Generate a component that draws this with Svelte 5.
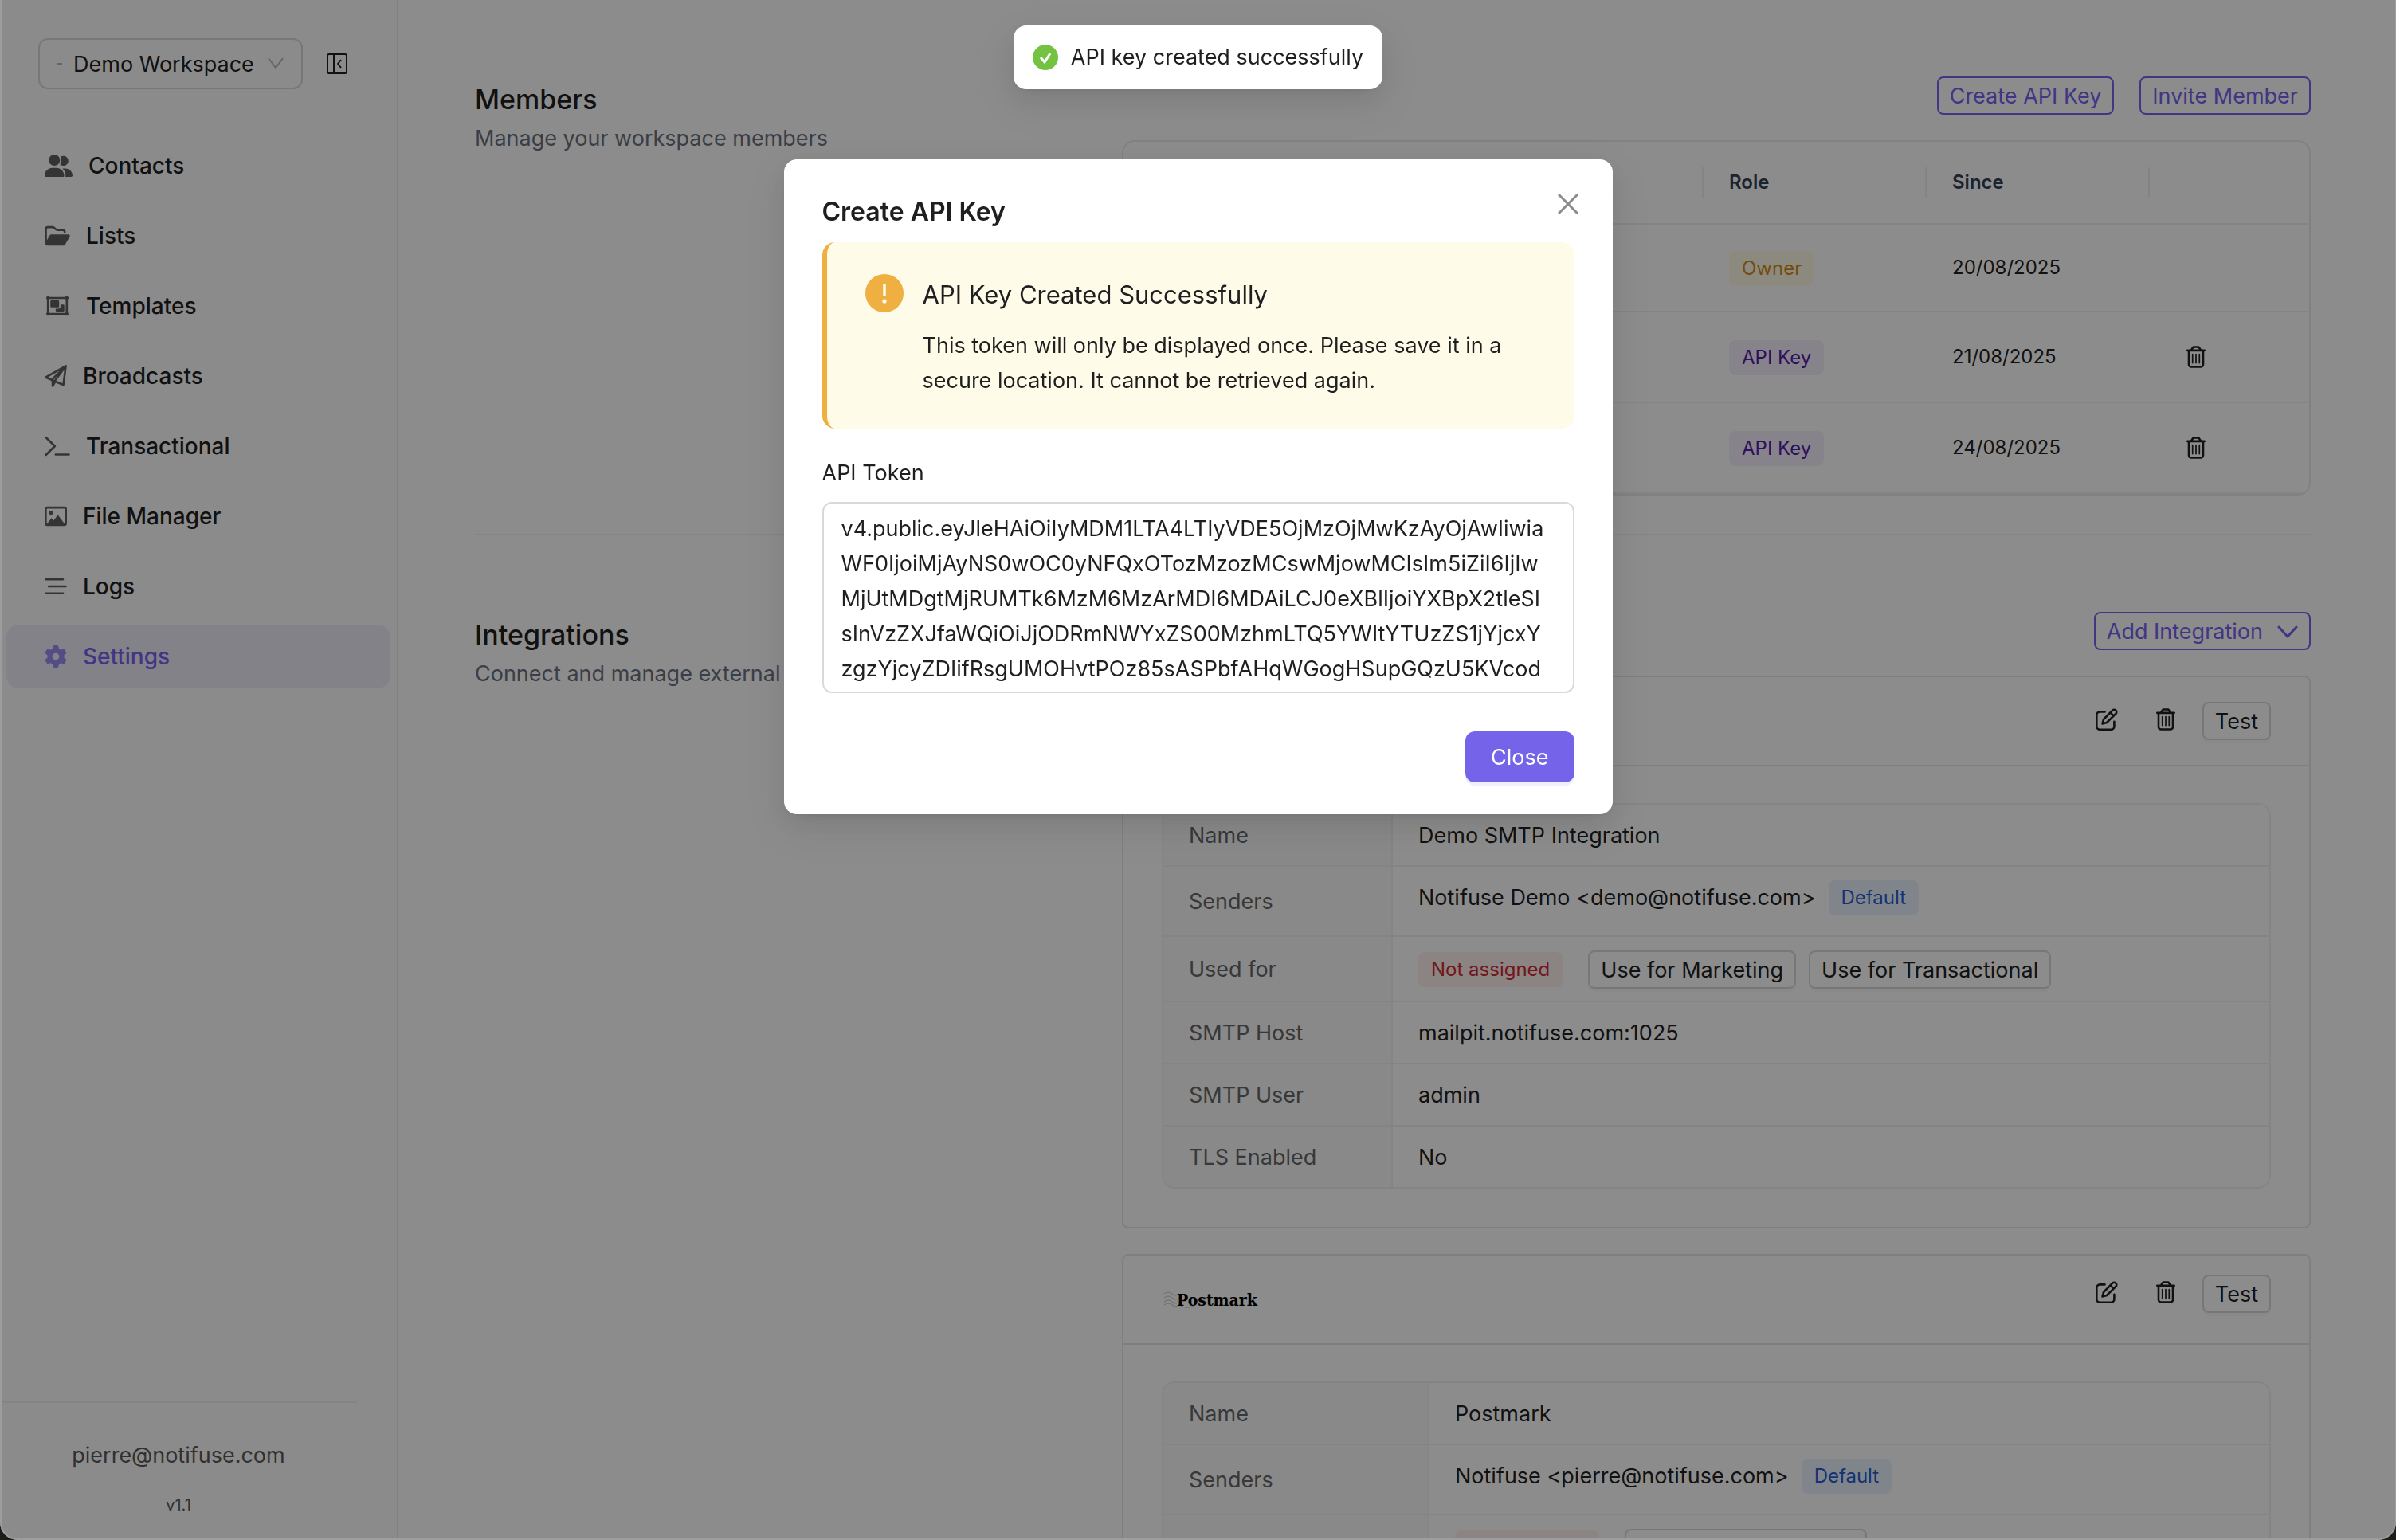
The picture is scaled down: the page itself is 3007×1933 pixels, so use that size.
<script>
	const trashPath = 'M170.5 51.6L151.5 80h145l-19-28.4c-1.5-2.2-4-3.6-6.7-3.6H177.1c-2.7 0-5.2 1.3-6.7 3.6zm147-26.6L354.2 80H368h48 8c13.3 0 24 10.7 24 24s-10.7 24-24 24h-8V432c0 44.2-35.8 80-80 80H112c-44.2 0-80-35.8-80-80V128H24c-13.3 0-24-10.7-24-24S10.7 80 24 80h8H80 93.8l36.7-55.1C140.9 9.4 158.4 0 177.1 0h93.7c18.7 0 36.2 9.4 46.6 24.9zM80 128V432c0 17.7 14.3 32 32 32H336c17.7 0 32-14.3 32-32V128H80zm80 64V400c0 8.8-7.2 16-16 16s-16-7.2-16-16V192c0-8.8 7.2-16 16-16s16 7.2 16 16zm80 0V400c0 8.8-7.2 16-16 16s-16-7.2-16-16V192c0-8.8 7.2-16 16-16s16 7.2 16 16zm80 0V400c0 8.8-7.2 16-16 16s-16-7.2-16-16V192c0-8.8 7.2-16 16-16s16 7.2 16 16z'

	// fill = solid shapes, line = stroked shapes, width = icon width in px at 28px height
	const nav = [
		{
			label: 'Contacts', box: 640, width: 35,
			fill: 'M96 128a128 128 0 1 1 256 0A128 128 0 1 1 96 128zM0 482.3C0 383.8 79.8 304 178.3 304h91.4C368.2 304 448 383.8 448 482.3c0 16.4-13.3 29.7-29.7 29.7H29.7C13.3 512 0 498.7 0 482.3zM609.3 512H471.4c5.4-9.4 8.6-20.3 8.6-32v-8c0-60.7-27.1-115.2-69.8-151.8c2.4-.1 4.7-.2 7.1-.2h61.4C567.8 320 640 392.2 640 481.3c0 17-13.8 30.7-30.7 30.7zM432 256c-31 0-59-12.6-79.3-32.9C372.4 196.5 384 163.6 384 128c0-26.8-6.6-52.1-18.3-74.3C384.3 40.1 407.2 32 432 32c61.9 0 112 50.1 112 112s-50.1 112-112 112z'
		},
		{
			label: 'Lists', box: 576, width: 32,
			fill: 'M384 480h48c11.4 0 21.9-6 27.6-15.9l112-192c5.8-9.9 5.8-22.1 .1-32.1S555.5 224 544 224H144c-11.4 0-21.9 6-27.6 15.9L48 357.1V96c0-8.8 7.2-16 16-16H181.5c4.2 0 8.3 1.7 11.3 4.7l26.5 26.5c21 21 49.5 32.8 79.2 32.8H416c8.8 0 16 7.2 16 16v32h48V160c0-35.3-28.7-64-64-64H298.5c-17 0-33.3-6.7-45.3-18.7L226.7 50.7c-12-12-28.3-18.7-45.3-18.7H64C28.7 32 0 60.7 0 96V416c0 35.3 28.7 64 64 64H87.7 384z'
		},
		{
			label: 'Templates', box: 576, width: 32,
			fill: 'M152 128h152a24 24 0 0 1 24 24v112a24 24 0 0 1-24 24H152a24 24 0 0 1-24-24V152a24 24 0 0 1 24-24zM360 224h64a24 24 0 0 1 24 24v112a24 24 0 0 1-24 24H272a24 24 0 0 1-24-24v-40h56a56 56 0 0 0 56-56zM72 32a40 40 0 1 0 .1 0zM504 32a40 40 0 1 0 .1 0zM72 400a40 40 0 1 0 .1 0zM504 400a40 40 0 1 0 .1 0z',
			line: 'M72 72H504V440H72z'
		},
		{
			label: 'Broadcasts', box: 512, width: 28,
			fill: 'M160 350L262 396L206 500Q160 524 160 474z',
			line: 'M486 26L24 284L160 346L430 456zM486 26L160 346M486 26L222 380'
		},
		{ label: 'Transactional', box: 576, width: 32, line: 'M24 56L230 256L24 456M248 448H552' },
		{
			label: 'File Manager', box: 512, width: 28,
			fill: 'M144 128a48 48 0 1 0 .1 0zM40 448L160 296L208 350L304 224L472 448z',
			line: 'M64 56H448A40 40 0 0 1 488 96V416A40 40 0 0 1 448 456H64A40 40 0 0 1 24 416V96A40 40 0 0 1 64 56z'
		},
		{ label: 'Logs', box: 512, width: 28, line: 'M28 96H420M92 256H484M28 416H420' },
		{
			label: 'Settings', box: 512, width: 28, active: true,
			fill: 'M495.9 166.6c3.2 8.7 .5 18.4-6.4 24.6l-43.3 39.4c1.1 8.3 1.7 16.8 1.7 25.4s-.6 17.1-1.7 25.4l43.3 39.4c6.9 6.2 9.6 15.9 6.4 24.6c-4.4 11.9-9.7 23.3-15.8 34.3l-4.7 8.1c-6.6 11-14 21.4-22.1 31.2c-5.9 7.2-15.7 9.6-24.5 6.8l-55.7-17.7c-13.4 10.3-28.2 18.9-44 25.4l-12.5 57.1c-2 9.1-9 16.3-18.2 17.8c-13.8 2.3-28 3.5-42.5 3.5s-28.7-1.2-42.5-3.5c-9.2-1.5-16.2-8.7-18.2-17.8l-12.5-57.1c-15.8-6.5-30.6-15.1-44-25.4L83.1 425.9c-8.8 2.8-18.6 .3-24.5-6.8c-8.1-9.8-15.5-20.2-22.1-31.2l-4.7-8.1c-6.1-11-11.4-22.4-15.8-34.3c-3.2-8.7-.5-18.4 6.4-24.6l43.3-39.4C64.6 273.1 64 264.6 64 256s.6-17.1 1.7-25.4L22.4 191.2c-6.9-6.2-9.6-15.9-6.4-24.6c4.4-11.9 9.7-23.3 15.8-34.3l4.7-8.1c6.6-11 14-21.4 22.1-31.2c5.9-7.2 15.7-9.6 24.5-6.8l55.7 17.7c13.4-10.3 28.2-18.9 44-25.4l12.5-57.1c2-9.1 9-16.3 18.2-17.8C227.3 1.2 241.5 0 256 0s28.7 1.2 42.5 3.5c9.2 1.5 16.2 8.7 18.2 17.8l12.5 57.1c15.8 6.5 30.6 15.1 44 25.4l55.7-17.7c8.8-2.8 18.6-.3 24.5 6.8c8.1 9.8 15.5 20.2 22.1 31.2l4.7 8.1c6.1 11 11.4 22.4 15.8 34.3zM256 336a80 80 0 1 0 0-160 80 80 0 1 0 0 160z'
		}
	]

	const members = [
		{ role: 'Owner', color: 'gold', since: '20/08/2025' },
		{ role: 'API Key', color: 'purple', since: '21/08/2025', removable: true },
		{ role: 'API Key', color: 'purple', since: '24/08/2025', removable: true }
	]

	const integrations = [
		{
			labelWidth: 288,
			rows: [
				{ label: 'Name', value: 'Demo SMTP Integration' },
				{ label: 'Senders', sender: 'Notifuse Demo <demo@notifuse.com>' },
				{ label: 'Used for', uses: ['Marketing', 'Transactional'] },
				{ label: 'SMTP Host', value: 'mailpit.notifuse.com:1025' },
				{ label: 'SMTP User', value: 'admin' },
				{ label: 'TLS Enabled', value: 'No' }
			]
		},
		{
			logo: true,
			labelWidth: 334,
			rows: [
				{ label: 'Name', value: 'Postmark' },
				{ label: 'Senders', sender: 'Notifuse <pierre@notifuse.com>' },
				{ label: 'Used for', uses: ['Transactional'] }
			]
		}
	]

	const token = [
		'v4.public.eyJleHAiOiIyMDM1LTA4LTIyVDE5OjMzOjMwKzAyOjAwIiwia',
		'WF0IjoiMjAyNS0wOC0yNFQxOTozMzozMCswMjowMCIsIm5iZiI6IjIw',
		'MjUtMDgtMjRUMTk6MzM6MzArMDI6MDAiLCJ0eXBlIjoiYXBpX2tleSI',
		'sInVzZXJfaWQiOiJjODRmNWYxZS00MzhmLTQ5YWItYTUzZS1jYjcxY',
		'zgzYjcyZDIifRsgUMOHvtPOz85sASPbfAHqWGogHSupGQzU5KVcod'
	].join('\n')
</script>

{#snippet trash()}
	<svg width="24" height="28" viewBox="0 0 448 512" fill="currentColor"><path d={trashPath} /></svg>
{/snippet}

<div class="app">
	<aside>
		<div class="top">
			<div class="workspace">
				<span class="dash"></span>
				<select aria-label="Workspace">
					<option>Demo Workspace</option>
				</select>
				<svg width="20" height="16" viewBox="0 0 20 16" fill="none" stroke="currentColor" stroke-width="2"><path d="M1 1l9 12 9-12" /></svg>
			</div>
			<button class="collapse" aria-label="Collapse menu">
				<svg width="26" height="26" viewBox="0 0 26 26" fill="none" stroke="currentColor" stroke-width="2" stroke-linejoin="round">
					<rect x="1" y="1" width="24" height="24" rx="2" />
					<path d="M9 1v24M18 8l-4 5 4 5" />
				</svg>
			</button>
		</div>

		<nav>
			{#each nav as item}
				<a href="#{item.label}" class={item.active ? 'active' : ''}>
					<svg width={item.width} height="28" viewBox="0 0 {item.box} 512">
						{#if item.fill}<path d={item.fill} fill="currentColor" />{/if}
						{#if item.line}<path d={item.line} fill="none" stroke="currentColor" stroke-width="48" stroke-linecap="round" stroke-linejoin="round" />{/if}
					</svg>
					{item.label}
				</a>
			{/each}
		</nav>

		<footer>
			<div class="email">pierre@notifuse.com</div>
			<div class="version">v1.1</div>
		</footer>
	</aside>

	<main>
		<section>
			<div class="intro">
				<h2>Members</h2>
				<p>Manage your workspace members</p>
			</div>
			<div class="content">
				<div class="actions">
					<button class="btn ghost">Create API Key</button>
					<button class="btn ghost">Invite Member</button>
				</div>
				<div class="table-wrap">
					<table class="members">
						<thead>
							<tr>
								<th></th>
								<th class="col">Role</th>
								<th class="col">Since</th>
								<th class="last"></th>
							</tr>
						</thead>
						<tbody>
							{#each members as member}
								<tr class={member.removable ? 'tall' : ''}>
									<td></td>
									<td><span class="tag {member.color}">{member.role}</span></td>
									<td>{member.since}</td>
									<td>
										{#if member.removable}
											<button class="icon-btn" aria-label="Delete">{@render trash()}</button>
										{/if}
									</td>
								</tr>
							{/each}
						</tbody>
					</table>
				</div>
			</div>
		</section>

		<hr />

		<section>
			<div class="intro">
				<h2>Integrations</h2>
				<p>Connect and manage external services</p>
			</div>
			<div class="content">
				<div class="actions">
					<button class="btn ghost">
						Add Integration
						<svg width="26" height="16" viewBox="0 0 26 16" fill="none" stroke="currentColor" stroke-width="3" stroke-linecap="round" stroke-linejoin="round"><path d="M2 2l11 12L24 2" /></svg>
					</button>
				</div>
				{#each integrations as integration}
					<div class="card">
						<div class="card-head" class:with-logo={integration.logo}>
							{#if integration.logo}
								<svg class="logo" width="124" height="32" viewBox="0 0 124 32">
									<path d="M3 9q5-4 10 0t9 0M3 14q5-4 10 0t9 0M3 19q5-4 10 0t9 0M3 23q5-4 10 0t9 0q9 6 18 1" fill="none" stroke="#c4c4c4" stroke-width="1" />
									<text x="19" y="24">Postmark</text>
								</svg>
							{/if}
							<div class="tools">
								<button class="icon-btn" aria-label="Edit">
									<svg width="28" height="28" viewBox="0 0 28 28" fill="none" stroke="currentColor" stroke-width="2.6" stroke-linecap="round" stroke-linejoin="round">
										<path d="M11.5 4.4H5.3a4 4 0 0 0-4 4v14.3a4 4 0 0 0 4 4h14.1a4 4 0 0 0 4-4v-5.900" />
										<path d="M8.5 19.5L10 14L21.2 2.6a2.9 2.9 0 0 1 4.2 4.2L14 18zM18.5 5.4l4.2 4.2" />
									</svg>
								</button>
								<button class="icon-btn" aria-label="Delete">{@render trash()}</button>
								<button class="btn">Test</button>
							</div>
						</div>
						<div class="card-body">
							<table class="details">
								<tbody>
									{#each integration.rows as row}
										<tr>
											<th style="width: {integration.labelWidth}px">{row.label}</th>
											<td>
												{#if row.sender}
													<div class="sender">{row.sender}<span class="tag blue">Default</span></div>
												{:else if row.uses}
													<div class="usage">
														<span class="tag red">Not assigned</span>
														{#each row.uses as use}
															<button class="btn">Use for {use}</button>
														{/each}
													</div>
												{:else}
													{row.value}
												{/if}
											</td>
										</tr>
									{/each}
								</tbody>
							</table>
						</div>
					</div>
				{/each}
			</div>
		</section>
	</main>
</div>

<div class="mask">
	<div class="modal" role="dialog" aria-labelledby="modal-title">
		<button class="close" aria-label="Dismiss">
			<svg width="26" height="26" viewBox="0 0 26 26" stroke="currentColor" stroke-width="3"><path d="M1 1l24 24M25 1L1 25" /></svg>
		</button>
		<h3 id="modal-title">Create API Key</h3>
		<div class="alert">
			<svg width="48" height="48" viewBox="0 0 48 48">
				<circle cx="24" cy="24" r="24" fill="#efaf41" />
				<path d="M22.3 12h3.4v16h-3.4z" fill="#fff" />
				<circle cx="24" cy="34" r="2.6" fill="#fff" />
			</svg>
			<div>
				<div class="alert-title">API Key Created Successfully</div>
				<div>This token will only be displayed once. Please save it in a secure location. It cannot be retrieved again.</div>
			</div>
		</div>
		<label for="token">API Token</label>
		<textarea id="token" readonly value={token}></textarea>
		<div class="modal-foot">
			<button class="primary">Close</button>
		</div>
	</div>
</div>

<div class="toast-layer">
	<div class="toast" role="status">
		<svg width="32" height="32" viewBox="0 0 32 32">
			<circle cx="16" cy="16" r="16" fill="#73c241" />
			<path d="M10 16l5 6 7-11" fill="none" stroke="#fff" stroke-width="3" />
		</svg>
		API key created successfully
	</div>
</div>

<div class="frame"></div>

<style>
	:global(body) {
		margin: 0;
		overflow: hidden;
		font-family: Inter, "Noto Sans", sans-serif;
		font-size: 27px;
		line-height: 44px;
		color: #1f1f1f;
		background: #fff;
	}

	:global(*) {
		box-sizing: border-box;
	}

	svg {
		display: block;
		flex: none;
	}

	button,
	select,
	textarea {
		font: inherit;
		color: inherit;
		background: none;
		border: 0;
		margin: 0;
		padding: 0;
	}

	.app {
		display: flex;
		height: 100vh;
		overflow: hidden;
	}

	/* sidebar */

	aside {
		width: 500px;
		flex: none;
		display: flex;
		flex-direction: column;
		border-right: 2px solid #ebebeb;
		background: #fdfdfd;
	}

	.top {
		display: flex;
		align-items: center;
		padding: 48px 48px 0;
		gap: 30px;
	}

	.workspace {
		display: flex;
		align-items: center;
		width: 332px;
		height: 64px;
		padding: 0 22px;
		border: 2px solid #d9d9d9;
		border-radius: 12px;
	}

	.dash {
		width: 6px;
		height: 2px;
		margin-right: 14px;
		background: #bbb;
	}

	.workspace select {
		flex: 1;
		padding-top: 2px;
		appearance: none;
	}

	.workspace svg {
		color: #bbb;
	}

	nav {
		display: flex;
		flex-direction: column;
		gap: 8px;
		padding: 56px 8px 0;
		flex: 1;
	}

	nav a {
		display: flex;
		align-items: center;
		gap: 20px;
		height: 80px;
		padding: 0 48px;
		border-radius: 16px;
		font-size: 28px;
		font-weight: 500;
		color: inherit;
		text-decoration: none;
	}

	nav svg {
		opacity: .7;
	}

	nav a.active {
		background: #f0edfa;
		color: #7763f1;
	}

	footer {
		width: 448px;
		height: 174px;
		padding-top: 44px;
		border-top: 2px solid #f0f0f0;
		text-align: center;
		color: #595959;
	}

	.version {
		margin-top: 18px;
		font-size: 20px;
	}

	/* page */

	main {
		flex: 1;
		padding: 96px 107px 0 96px;
	}

	section {
		display: grid;
		grid-template-columns: minmax(0, 1fr) minmax(0, 2fr);
		gap: 66px;
	}

	h2 {
		margin: 0;
		font-size: 34px;
		line-height: 58px;
		font-weight: 500;
	}

	p {
		margin: 0;
		line-height: 40px;
		color: #6b7280;
	}

	hr {
		height: 2px;
		margin: 48px 0 96px;
		border: 0;
		background: #f0f0f0;
	}

	.content {
		display: flex;
		flex-direction: column;
		gap: 32px;
	}

	.actions {
		display: flex;
		justify-content: flex-end;
		gap: 32px;
	}

	.btn {
		display: flex;
		align-items: center;
		gap: 18px;
		height: 48px;
		padding: 2px 14px 0;
		border: 2px solid #d9d9d9;
		border-radius: 8px;
		background: #fff;
		box-shadow: 0 4px 0 rgba(0, 0, 0, .02);
	}

	.btn.ghost {
		border-color: #7763f1;
		color: #7763f1;
		background: none;
		box-shadow: none;
	}

	.icon-btn {
		display: flex;
		align-items: center;
		height: 44px;
		padding: 0 14px;
	}

	.tag {
		display: inline-block;
		height: 44px;
		padding: 0 16px;
		border-radius: 8px;
		font-size: 24px;
		line-height: 44px;
	}

	.gold {
		background: #fffbe6;
		color: #d48b20;
	}

	.purple {
		background: #f6effe;
		color: #531dab;
	}

	.blue {
		background: #e8f3fe;
		color: #2b5cd0;
	}

	.red {
		background: #fdf1ef;
		color: #cf2a30;
	}

	.table-wrap {
		border: 2px solid #ebebeb;
		border-radius: 16px;
		overflow: hidden;
	}

	table {
		width: 100%;
		border-collapse: separate;
		border-spacing: 0;
		table-layout: fixed;
	}

	th,
	td {
		padding: 0 32px;
		text-align: left;
	}

	.members {
		font-size: 24px;
	}

	.members th {
		height: 104px;
		border-bottom: 2px solid #f0f0f0;
		font-weight: 600;
		color: #334155;
		background: linear-gradient(#f0f0f0, #f0f0f0) right center / 2px 38px no-repeat;
	}

	.members .col {
		width: 280px;
	}

	.members .last {
		width: 200px;
		background: none;
	}

	.members td {
		height: 110px;
		border-bottom: 2px solid #f0f0f0;
	}

	.members .tall td {
		height: 114px;
	}

	.members .tag {
		vertical-align: middle;
	}

	.card {
		border: 2px solid #e8e8e8;
		border-radius: 8px;
	}

	.card-head {
		display: flex;
		align-items: center;
		height: 112px;
		padding: 0 48px;
		border-bottom: 2px solid #e8e8e8;
	}

	.with-logo {
		padding: 24px 48px;
	}

	.with-logo .tools {
		align-self: flex-start;
	}

	.logo text {
		font-family: "DejaVu Serif Condensed", "DejaVu Serif", serif;
		font-size: 21px;
		font-weight: bold;
	}

	.tools {
		display: flex;
		align-items: flex-start;
		gap: 20px;
		margin-left: auto;
	}

	.card-body {
		padding: 46px 48px 48px;
	}

	.details {
		border: 2px solid #f0f0f0;
		border-radius: 16px;
		overflow: hidden;
	}

	.details th,
	.details td {
		padding: 17px 32px 15px;
		border-bottom: 2px solid #f0f0f0;
	}

	.details tr:last-child th,
	.details tr:last-child td {
		border-bottom: 0;
	}

	.details th {
		border-right: 2px solid #f0f0f0;
		background: #fafafa;
		font-weight: 400;
		color: #666;
	}

	.sender {
		display: flex;
		gap: 16px;
		height: 46px;
		margin-bottom: 8px;
	}

	.usage {
		display: flex;
		align-items: center;
		gap: 16px;
	}

	.usage .tag {
		margin-right: 16px;
	}

	/* overlays */

	.mask {
		position: fixed;
		inset: 0;
		display: flex;
		justify-content: center;
		align-items: flex-start;
		padding-top: 200px;
		background: rgba(0, 0, 0, .45);
	}

	.modal,
	.toast {
		background: #fff;
		border-radius: 16px;
		box-shadow: 0 12px 32px 0 rgba(0, 0, 0, .08), 0 6px 12px -8px rgba(0, 0, 0, .12), 0 18px 56px 16px rgba(0, 0, 0, .05);
	}

	.modal {
		position: relative;
		width: 1040px;
		padding: 42px 48px 40px;
	}

	.close {
		position: absolute;
		top: 24px;
		right: 24px;
		display: grid;
		place-items: center;
		width: 64px;
		height: 64px;
		color: #8c8c8c;
	}

	h3 {
		margin: 0 0 14px;
		font-size: 32px;
		line-height: 48px;
		font-weight: 600;
	}

	.alert {
		display: flex;
		gap: 24px;
		padding: 40px 48px 38px;
		border-left: 6px solid #efaf41;
		border-radius: 16px;
		background: #fefbe8;
	}

	.alert-title {
		margin-bottom: 16px;
		font-size: 31px;
		line-height: 52px;
	}

	label {
		display: block;
		margin: 34px 0 14px;
	}

	textarea {
		display: block;
		width: 100%;
		height: 240px;
		padding: 10px 22px 6px;
		border: 2px solid #d9d9d9;
		border-radius: 12px;
		resize: none;
		overflow: hidden;
		white-space: pre;
	}

	.modal-foot {
		display: flex;
		justify-content: flex-end;
		margin-top: 48px;
	}

	.primary {
		height: 64px;
		padding: 2px 32px 0;
		border-radius: 12px;
		background: #7563e9;
		color: #fff;
		box-shadow: 0 4px 0 rgba(119, 99, 241, .1);
	}

	.toast-layer {
		position: fixed;
		inset: 32px 0 auto;
		display: flex;
		justify-content: center;
	}

	.toast {
		display: flex;
		align-items: center;
		gap: 16px;
		padding: 18px 24px;
	}

	/* edge of the window with its rounded lower corners */
	.frame {
		position: fixed;
		inset: 0;
		border: 2px solid #9d9d9d;
		border-top: 0;
		border-right-width: 1px;
		border-radius: 0 0 22px 22px;
		box-shadow: 0 0 0 40px #1c1c18;
		pointer-events: none;
	}
</style>
